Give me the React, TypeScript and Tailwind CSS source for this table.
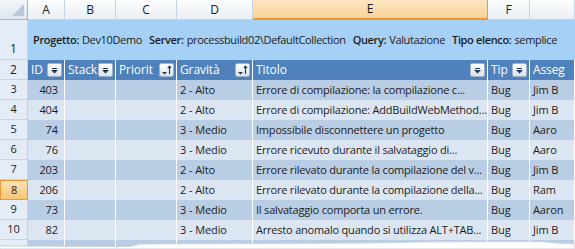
import React from 'react';

const cols = 'grid grid-cols-[28px_37px_51px_61px_76px_235px_42px_45px]';

const letters = ['A', 'B', 'C', 'D', 'E', 'F', ''];

const headers: { label: string; sort?: boolean }[] = [
  { label: 'ID' },
  { label: 'Stack' },
  { label: 'Priorit', sort: true },
  { label: 'Gravità', sort: true },
  { label: 'Titolo' },
  { label: 'Tip' },
  { label: 'Asseg' },
];

const rows = [
  { n: 3, id: '403', grav: '2 - Alto', title: 'Errore di compilazione: la compilazione c...', who: 'Jim B' },
  { n: 4, id: '404', grav: '2 - Alto', title: 'Errore di compilazione: AddBuildWebMethod...', who: 'Jim B' },
  { n: 5, id: '74', grav: '3 - Medio', title: 'Impossibile disconnettere un progetto', who: 'Aaro' },
  { n: 6, id: '76', grav: '3 - Medio', title: 'Errore ricevuto durante il salvataggio di...', who: 'Aaro' },
  { n: 7, id: '203', grav: '2 - Alto', title: 'Errore rilevato durante la compilazione del v...', who: 'Jim B' },
  { n: 8, id: '206', grav: '2 - Alto', title: 'Errore rilevato durante la compilazione della...', who: 'Ram' },
  { n: 9, id: '73', grav: '3 - Medio', title: 'Il salvataggio comporta un errore.', who: 'Aaron' },
  { n: 10, id: '82', grav: '3 - Medio', title: 'Arresto anomalo quando si utilizza ALT+TAB...', who: 'Jim B' },
];

function FilterButton({ sort }: { sort?: boolean }) {
  return (
    <span className="absolute right-[2px] top-[3px] w-[15px] h-[14px] rounded-[2px] border border-[#a3b3c8] bg-gradient-to-b from-white to-[#dbe2ea] flex items-center justify-center">
      {sort ? (
        <svg width="11" height="10" viewBox="0 0 11 10">
          <path d="M1 7h5l-2.5 2.5z" fill="#1e395b" />
          <path d="M8.5 9V1.5M6.8 3.2L8.5 1.2l1.7 2" stroke="#1e395b" strokeWidth="1.1" fill="none" />
        </svg>
      ) : (
        <svg width="9" height="7" viewBox="0 0 9 7">
          <path d="M2 1.5h5" stroke="#1e395b" strokeWidth="1" />
          <path d="M1 3h7l-3.5 3.5z" fill="#1e395b" />
        </svg>
      )}
    </span>
  );
}

export default function App() {
  return (
    <div className="relative w-[575px] h-[249px] overflow-hidden bg-white text-[11px] text-[#1c1c1c] font-['Open_Sans','Liberation_Sans',sans-serif] tracking-[-0.1px]">
      {/* column letters */}
      <div className={`${cols} h-[20px] text-[12px]`}>
        <div className="relative border-r border-b border-[#9eb6ce] bg-gradient-to-b from-[#f3f6fa] to-[#dde6f0]">
          <svg className="absolute right-[3px] bottom-[3px]" width="12" height="12" viewBox="0 0 12 12">
            <path d="M12 0V12H0z" fill="#b7c6d8" />
          </svg>
        </div>
        {letters.map((l, i) => (
          <div
            key={i}
            className={
              i === 4
                ? 'flex items-center justify-center border-r border-b-2 border-[#f29536] bg-gradient-to-b from-[#fde7c1] to-[#f9d196]'
                : 'flex items-center justify-center border-r border-b border-[#c5d2e0] bg-gradient-to-b from-[#fbfcfd] to-[#eaf0f6]'
            }
          >
            {l}
          </div>
        ))}
      </div>

      {/* row 1 */}
      <div className="flex h-[40px]">
        <div className="w-[28px] shrink-0 flex items-end justify-center pb-[1px] border-r border-b border-[#c5d2e0] bg-[#e4ecf7] text-[12px]">1</div>
        <div className="flex-1 flex items-center pl-[5px] bg-[#a6d0f6] whitespace-nowrap tracking-[-0.35px]">
          <b className="font-semibold">Progetto:</b>
          <span className="ml-[3px]">Dev10Demo</span>
          <b className="font-semibold ml-[7px]">Server:</b>
          <span className="ml-[3px]">processbuild02\DefaultCollection</span>
          <b className="font-semibold ml-[7px]">Query:</b>
          <span className="ml-[3px]">Valutazione</span>
          <b className="font-semibold ml-[7px]">Tipo elenco:</b>
          <span className="ml-[3px]">semplice</span>
        </div>
      </div>

      {/* row 2: table header */}
      <div className={`${cols} h-[20px]`}>
        <div className="flex items-center justify-center border-r border-b border-[#c5d2e0] bg-[#e4ecf7] text-[12px]">2</div>
        {headers.map((h, i) => (
          <div key={i} className="relative flex items-center pl-[3px] bg-[#4f81bd] text-white text-[12px] border-r border-white whitespace-nowrap overflow-hidden">
            {h.label}
            {i < 6 && <FilterButton sort={h.sort} />}
          </div>
        ))}
      </div>

      {/* data rows */}
      {rows.map((r, k) => {
        const bg = k % 2 === 0 ? 'bg-[#b9cde5]' : 'bg-[#dce6f2]';
        const cell = `${bg} border-r border-white flex items-center whitespace-nowrap overflow-hidden`;
        return (
          <div key={r.n} className={`${cols} h-[20px]`}>
            <div
              className={
                r.n === 8
                  ? 'flex items-center justify-center border border-[#f29536] bg-gradient-to-b from-[#fde3b6] to-[#f7c66e]'
                  : 'flex items-center justify-center border-r border-b border-[#c5d2e0] bg-[#e4ecf7]'
              }
            >
              {r.n}
            </div>
            <div className={`${cell} justify-end pr-[6px]`}>{r.id}</div>
            <div className={cell} />
            <div className={cell} />
            <div className={`${cell} pl-[3px]`}>{r.grav}</div>
            <div className={`${cell} pl-[3px] tracking-[-0.2px]`}>{r.title}</div>
            <div className={`${cell} pl-[3px]`}>Bug</div>
            <div className={`${cell} pl-[3px]`}>{r.who}</div>
          </div>
        );
      })}

      {/* partial row 11 */}
      <div className={`${cols} h-[20px]`}>
        <div className="border-r border-[#c5d2e0] bg-[#e4ecf7]" />
        {[0, 1, 2, 3, 4, 5, 6].map(i => (
          <div key={i} className="bg-[#b9cde5] border-r border-white" />
        ))}
      </div>

      {/* torn edge */}
      <svg className="absolute left-0 bottom-0" width="575" height="10" viewBox="0 0 575 10">
        <path
          d="M0 7 L60 7.2 L130 7.5 L140 5 L250 4.5 L360 4 L420 3 L480 2.6 L540 2.4 L556 4 L575 5 L575 10 L0 10 Z"
          fill="#ffffff"
          stroke="#c9d3de"
          strokeWidth="1"
        />
      </svg>
    </div>
  );
}
